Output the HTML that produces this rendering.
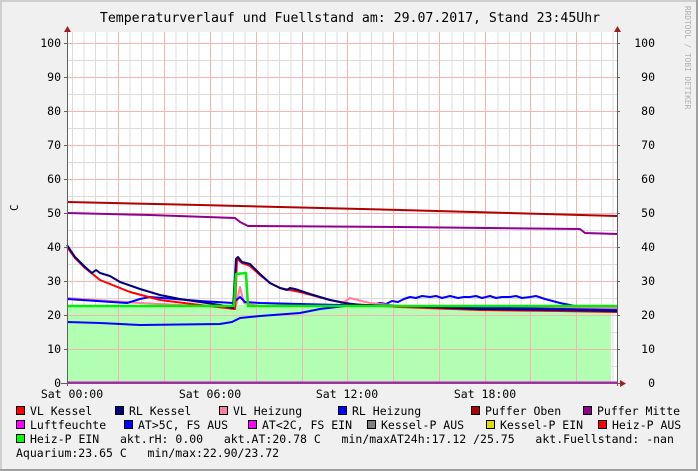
<!DOCTYPE html>
<html><head><meta charset="utf-8"><style>
html,body{margin:0;padding:0;background:#f0f0f0}
svg{display:block}
text{font-family:"DejaVu Sans Mono","Liberation Mono",monospace;fill:#000}
</style></head><body>
<svg width="698" height="471" viewBox="0 0 698 471" xmlns="http://www.w3.org/2000/svg">
<rect x="0" y="0" width="698" height="471" fill="#f0f0f0"/>
<rect x="0" y="0" width="698" height="2" fill="#cfcfcf"/>
<rect x="0" y="0" width="2" height="471" fill="#cfcfcf"/>
<rect x="0" y="469" width="698" height="2" fill="#a0a0a0"/>
<rect x="696" y="0" width="2" height="471" fill="#a0a0a0"/>
<text x="350" y="22" font-size="13.2" text-anchor="middle">Temperaturverlauf und Fuellstand am: 29.07.2017, Stand 23:45Uhr</text>
<text transform="translate(685,6) rotate(90)" font-size="7.8" style="fill:#b0b0b0">RRDTOOL / TOBI OETIKER</text>
<text transform="translate(18,211) rotate(-90)" font-size="11">C</text>
<rect x="67" y="32" width="550" height="351" fill="#fff"/>
<g stroke="#dcdcdc" stroke-width="1">
<path d="M67 366.5H617M67 332.5H617M67 298.5H617M67 264.5H617M67 230.5H617M67 196.5H617M67 162.5H617M67 128.5H617M67 94.5H617M67 60.5H617"/>
<path d="M72.5 32V383M84 32V383M95.5 32V383M107 32V383M130 32V383M141.5 32V383M153 32V383M176 32V383M187.5 32V383M199 32V383M222 32V383M233.5 32V383M245 32V383M268 32V383M279.5 32V383M291 32V383M314 32V383M325.5 32V383M337 32V383M360 32V383M371.5 32V383M383 32V383M406 32V383M417.5 32V383M429 32V383M452 32V383M463.5 32V383M475 32V383M498 32V383M509.5 32V383M521 32V383M544 32V383M555.5 32V383M567 32V383M590 32V383M601.5 32V383M613 32V383"/>
</g>
<rect x="67" y="305" width="544" height="78" fill="#b2feb2"/>
<g stroke="#f4b4b4" stroke-width="1">
<path d="M67 349.5H617M67 315.5H617M67 281.5H617M67 247.5H617M67 213.5H617M67 179.5H617M67 145.5H617M67 111.5H617M67 77.5H617M67 43.5H617"/>
<path d="M118.5 32V383M164.5 32V383M210.5 32V383M256.5 32V383M302.5 32V383M347.5 32V383M393.5 32V383M439.5 32V383M485.5 32V383M530.5 32V383M576.5 32V383"/>
</g>
<g fill="none" stroke-width="2" stroke-linejoin="round">
<polyline stroke="#b00000" points="67,202 200,205 400,210 617,216"/>
<polyline stroke="#900090" points="67,213 150,215 235,218 240,222 248,226 400,227 580,229 585,233 617,234"/>
<polyline stroke="#0000ff" points="67,322 100,323 140,325 220,324 232,322 240,318 260,316 300,313 320,309 345,306 370,305 380,303 386,304 392,301 398,302 404,299 410,297 416,298 422,296 430,297 436,296 442,298 450,296 458,298 464,297 470,297 476,296 482,298 490,296 496,298 502,297 510,297 516,296 522,298 530,297 536,296 545,299 560,303 575,306 590,309 617,312"/>
<polyline stroke="#ff80a0" points="67,298 140,303 200,306 236,306 240,287 244,303 260,306 340,305 350,298 370,303 400,306 617,308"/>
<polyline stroke="#0000ff" points="67,299 127,303 140,299 150,297 200,301 233,303 240,297 245,302 260,303 340,305 617,310"/>
<polyline stroke="#ff0000" points="67,247 75,258 85,268 100,280 115,286 130,292 160,300 200,305 235,309 237,259 242,263 250,266 260,275 270,283 280,288 290,290 300,292 330,300 350,304 400,307 480,310 560,311 617,312"/>
<polyline stroke="#000080" points="67,245 75,257 85,267 92,273 96,270 100,273 110,276 120,282 140,289 160,295 180,299 200,302 220,305 233,308 236,259 238,257 242,262 250,264 260,274 270,283 280,288 287,290 290,288 295,289 310,294 330,300 345,303 360,305 400,306 480,309 560,310 617,311"/>
<polyline stroke="#00ee00" stroke-width="2.5" points="67,306 234,306 236,274 246,273 248,306 617,306"/>
<path d="M67 382.5H617" stroke="#e000e0" stroke-width="2"/>
</g>
<g stroke="#606060" stroke-width="1">
<path d="M67.5 28V386M617.5 28V386M61 383.5H621"/>
<path d="M64 349.5H67M64 315.5H67M64 281.5H67M64 247.5H67M64 213.5H67M64 179.5H67M64 145.5H67M64 111.5H67M64 77.5H67M64 43.5H67"/>
<path d="M617 349.5H620M617 315.5H620M617 281.5H620M617 247.5H620M617 213.5H620M617 179.5H620M617 145.5H620M617 111.5H620M617 77.5H620M617 43.5H620"/>
</g>
<path d="M64 32L67.5 26L71 32Z" fill="#a02020"/>
<path d="M614 32L617.5 26L621 32Z" fill="#a02020"/>
<path d="M620 380L626 383.5L620 387Z" fill="#a02020"/>
<g font-size="11.5" text-anchor="end">
<text x="61" y="387">0</text><text x="61" y="353">10</text><text x="61" y="319">20</text><text x="61" y="285">30</text><text x="61" y="251">40</text><text x="61" y="217">50</text><text x="61" y="183">60</text><text x="61" y="149">70</text><text x="61" y="115">80</text><text x="61" y="81">90</text><text x="61" y="47">100</text>
<text x="655" y="387">0</text><text x="655" y="353">10</text><text x="655" y="319">20</text><text x="655" y="285">30</text><text x="655" y="251">40</text><text x="655" y="217">50</text><text x="655" y="183">60</text><text x="655" y="149">70</text><text x="655" y="115">80</text><text x="655" y="81">90</text><text x="655" y="47">100</text>
</g>
<g font-size="11.5" text-anchor="middle">
<text x="72" y="398">Sat 00:00</text><text x="210" y="398">Sat 06:00</text><text x="347" y="398">Sat 12:00</text><text x="485" y="398">Sat 18:00</text>
</g>
<g stroke="#000" stroke-width="1">
<rect x="16.5" y="406.5" width="8" height="8" fill="#ff0000"/>
<rect x="115.5" y="406.5" width="8" height="8" fill="#000080"/>
<rect x="219.5" y="406.5" width="8" height="8" fill="#ff80a0"/>
<rect x="338.5" y="406.5" width="8" height="8" fill="#0000ff"/>
<rect x="471.5" y="406.5" width="8" height="8" fill="#b00000"/>
<rect x="583.5" y="406.5" width="8" height="8" fill="#900090"/>
<rect x="16.5" y="420.5" width="8" height="8" fill="#ff00ff"/>
<rect x="124.5" y="420.5" width="8" height="8" fill="#0000ff"/>
<rect x="248.5" y="420.5" width="8" height="8" fill="#ff00ff"/>
<rect x="367.5" y="420.5" width="8" height="8" fill="#808080"/>
<rect x="486.5" y="420.5" width="8" height="8" fill="#dddd00"/>
<rect x="598.5" y="420.5" width="8" height="8" fill="#ff0000"/>
<rect x="16.5" y="434.5" width="8" height="8" fill="#00ff00"/>
</g>
<g font-size="11.5">
<text x="30" y="415">VL Kessel</text>
<text x="129" y="415">RL Kessel</text>
<text x="233" y="415">VL Heizung</text>
<text x="352" y="415">RL Heizung</text>
<text x="485" y="415">Puffer Oben</text>
<text x="597" y="415">Puffer Mitte</text>
<text x="30" y="429">Luftfeuchte</text>
<text x="138" y="429">AT&gt;5C, FS AUS</text>
<text x="262" y="429">AT&lt;2C, FS EIN</text>
<text x="381" y="429">Kessel-P AUS</text>
<text x="500" y="429">Kessel-P EIN</text>
<text x="612" y="429">Heiz-P AUS</text>
<text x="30" y="443" xml:space="preserve">Heiz-P EIN   akt.rH: 0.00   akt.AT:20.78 C   min/maxAT24h:17.12 /25.75   akt.Fuellstand: -nan</text>
<text x="16" y="457" xml:space="preserve">Aquarium:23.65 C   min/max:22.90/23.72</text>
</g>
</svg>
</body></html>
